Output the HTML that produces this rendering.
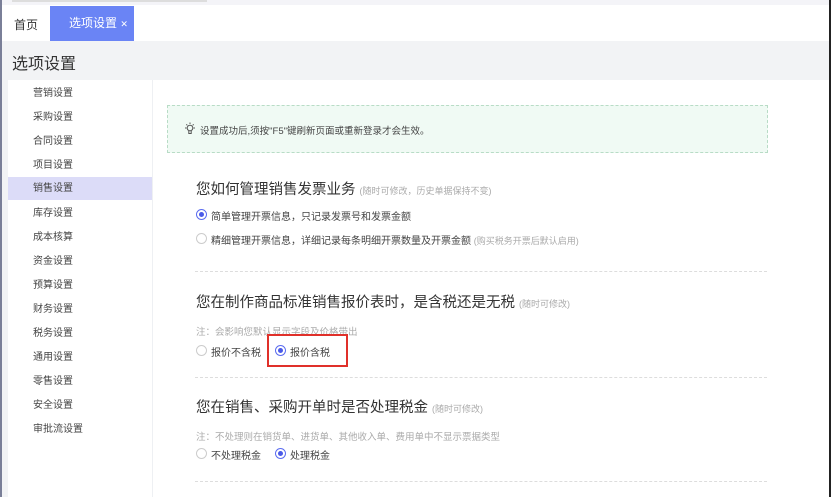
<!DOCTYPE html>
<html><head><meta charset="utf-8"><style>
*{margin:0;padding:0;box-sizing:border-box}
body{width:831px;height:497px;overflow:hidden;background:#fff;font-family:"Liberation Sans","Noto Sans CJK SC",sans-serif;position:relative;color:#333}
.abs{position:absolute}
.menu div{position:absolute;left:0;width:144px;height:23px;line-height:23px;padding-left:25px;font-size:10px;color:#444}
.r{position:absolute;width:11px;height:11px;border-radius:50%;border:1px solid #ccc;background:#fff}
.r.on{border-color:#5b6cf0}
.r.on::after{content:"";position:absolute;left:2px;top:2px;width:5px;height:5px;border-radius:50%;background:#4a5ae8}
.t{position:absolute;font-size:10px;color:#444;white-space:nowrap}
.h{position:absolute;font-size:14.5px;color:#333;white-space:nowrap}
.h span,.g{font-size:9px;color:#aaa}
.dv{position:absolute;left:195px;width:572px;border-top:1px dashed #ddd}
</style></head><body>
<div class="abs" style="left:0;top:0;width:831px;height:5px;background:#f4f4f8"></div>
<div class="abs" style="left:12px;top:0;width:195px;height:2px;background:#ddd"></div>
<div class="abs" style="left:0;top:0;width:2px;height:497px;background:#7a7f98"></div>
<div class="abs" style="left:829px;top:0;width:2px;height:497px;background:#222"></div>
<div class="abs" style="left:14px;top:16px;font-size:12px;color:#333">首页</div>
<div class="abs" style="left:50px;top:6px;width:84px;height:35px;background:#6a84f5;color:#fff;font-size:12px;line-height:35px;padding-left:19px">选项设置 <span style="font-size:9px">✕</span></div>
<div class="abs" style="left:2px;top:41px;width:827px;height:39px;background:#f2f3f5"></div>
<div class="abs" style="left:12px;top:50px;font-size:16px;color:#333">选项设置</div>
<div class="abs" style="left:2px;top:80px;width:6px;height:417px;background:#f2f3f5"></div>
<div class="abs" style="left:152px;top:80px;width:1px;height:417px;background:#eef0f3"></div>
<div class="menu abs" style="left:8px;top:82px">
<div style="top:0">营销设置</div><div style="top:24px">采购设置</div><div style="top:48px">合同设置</div><div style="top:72px">项目设置</div>
<div style="top:95px;background:#dcdcf8">销售设置</div><div style="top:120px">库存设置</div><div style="top:144px">成本核算</div><div style="top:168px">资金设置</div>
<div style="top:192px">预算设置</div><div style="top:216px">财务设置</div><div style="top:240px">税务设置</div><div style="top:264px">通用设置</div>
<div style="top:288px">零售设置</div><div style="top:312px">安全设置</div><div style="top:336px">审批流设置</div>
</div>
<div class="abs" style="left:167px;top:105px;width:601px;height:48px;border:1px dashed #b8dcc6;background:#f0faf4"></div>
<svg class="abs" style="left:184px;top:122px" width="12" height="13" viewBox="0 0 12 13" fill="none" stroke="#555" stroke-width="1"><circle cx="6" cy="6" r="2.8"/><path d="M4.8 9v2.5h2.4V9M6 0.5v1.5M1 6h1.5M9.5 6H11M2.3 2.3l1 1M9.7 2.3l-1 1"/></svg>
<div class="t" style="left:200px;top:123px;font-size:9.5px">设置成功后,须按"F5"键刷新页面或重新登录才会生效。</div>
<div class="h" style="left:196px;top:178px">您如何管理销售发票业务 <span>(随时可修改，历史单据保持不变)</span></div>
<div class="r on" style="left:196px;top:209px"></div><div class="t" style="left:211px;top:208px">简单管理开票信息，只记录发票号和发票金额</div>
<div class="r" style="left:196px;top:233px"></div><div class="t" style="left:211px;top:232px">精细管理开票信息，详细记录每条明细开票数量及开票金额 <span class="g">(购买税务开票后默认启用)</span></div>
<div class="dv" style="top:271px"></div>
<div class="h" style="left:196px;top:291px">您在制作商品标准销售报价表时，是含税还是无税 <span>(随时可修改)</span></div>
<div class="t" style="left:196px;top:324px;color:#aaa;font-size:9.5px">注：会影响您默认显示字段及价格带出</div>
<div class="r" style="left:196px;top:345px"></div><div class="t" style="left:211px;top:344px">报价不含税</div>
<div class="r on" style="left:275px;top:345px"></div><div class="t" style="left:290px;top:344px">报价含税</div>
<div class="abs" style="left:267px;top:334px;width:81px;height:33px;border:2px solid #e0302a"></div>
<div class="dv" style="top:377px"></div>
<div class="h" style="left:196px;top:396px">您在销售、采购开单时是否处理税金 <span>(随时可修改)</span></div>
<div class="t" style="left:196px;top:429px;color:#aaa;font-size:9.5px">注：不处理则在销货单、进货单、其他收入单、费用单中不显示票据类型</div>
<div class="r" style="left:196px;top:448px"></div><div class="t" style="left:211px;top:447px">不处理税金</div>
<div class="r on" style="left:275px;top:448px"></div><div class="t" style="left:290px;top:447px">处理税金</div>
<div class="dv" style="top:481px"></div>
</body></html>
